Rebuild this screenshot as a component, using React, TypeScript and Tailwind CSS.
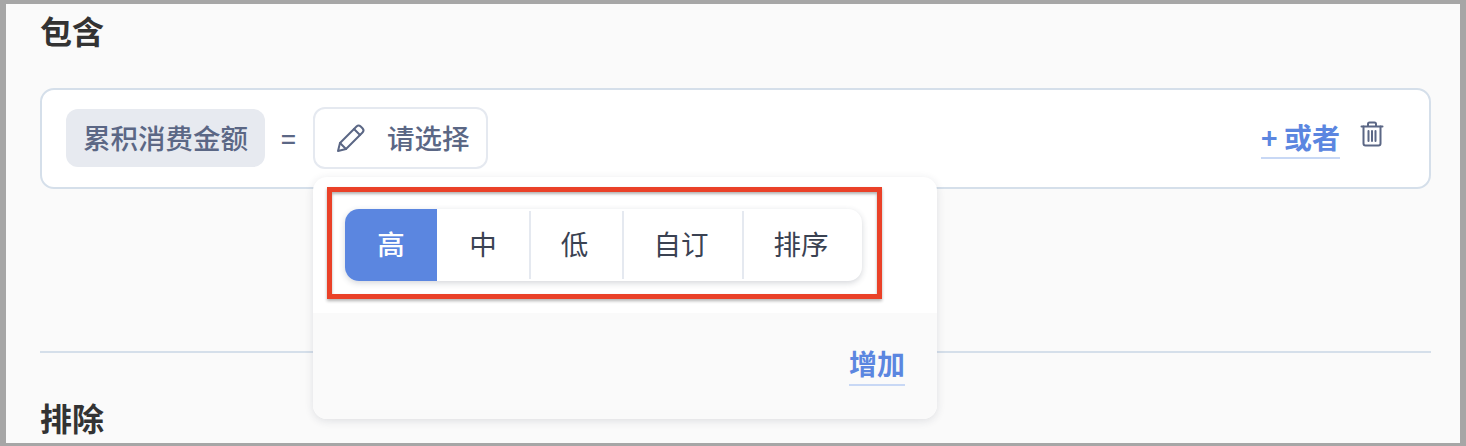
const font = { fontFamily: '"Noto Sans CJK SC", "Noto Sans CJK TC", sans-serif' };

function Segment({ label, active, width, divider }: { label: string; active?: boolean; width: string; divider?: boolean }) {
  return (
    <div className={`relative flex h-full items-center justify-center pb-[2px] text-[27.5px] ${divider ? "pr-[2px]" : ""} ${width} ${active ? "bg-[#5b86e0] font-medium text-white" : "text-[#3a4252]"}`}>
      {label}
      {divider && <span className="absolute left-0 top-[2px] bottom-[2px] w-[2px] bg-[#e5e9f0]" />}
    </div>
  );
}

export default function App() {
  return (
    <div style={font} className="h-[446px] w-[1466px] overflow-hidden border-x-[6px] border-t-[4px] border-b-[3px] border-[#a6a6a6] bg-[#fafafa]">
      <div className="flex h-full flex-col pl-[34px] pr-[29px]">
        <h2 className="h-[54px] pt-[4px] text-[32px] font-bold leading-[44px] text-[#333333]">包含</h2>
        <div className="relative mt-[30px] flex h-[101px] items-center rounded-[14px] border-2 border-[#d5dfea] bg-white pb-[2px] pl-[24px] pr-[45px]">
          <div className="flex h-[58px] w-[199px] items-center justify-center rounded-[12px] bg-[#e7eaf0] text-[27.5px] font-medium text-[#5b6785]">累积消费金额</div>
          <span className="ml-[16px] w-[16px] text-[26px] font-medium text-[#5b6785]">=</span>
          <div className="ml-[16px] flex h-[62px] w-[175px] items-center rounded-[12px] border-2 border-[#e5e9f0] pl-[21px] text-[27.5px] font-medium text-[#5b6785]">
            <svg viewBox="0 0 30 30" className="h-[30px] w-[30px]" fill="none" stroke="#5b6785" strokeWidth="2" strokeLinejoin="round" strokeLinecap="round">
              <path d="M2 28l2-8L20.5 3.5a3 3 0 0 1 4.2 0l1.8 1.8a3 3 0 0 1 0 4.2L10 26z" />
              <path d="M4 20l6 6M18 6l6 6" />
            </svg>
            <span className="ml-[21px]">请选择</span>
          </div>
          <div className="ml-auto flex items-start">
            <span className="mt-[2px] border-b-2 border-[#c8d8f5] pb-[2px] text-[28px] font-bold leading-[36px] text-[#5b86e0]">+ 或者</span>
            <svg viewBox="0 0 24 26" className="ml-[20px] mt-[4px] h-[26px] w-[24px]" fill="none" stroke="#5b6785" strokeWidth="2" strokeLinecap="round" strokeLinejoin="round">
              <path d="M1.5 5.5h21M8 5.5V3a1.5 1.5 0 0 1 1.5-1.5h5A1.5 1.5 0 0 1 16 3v2.5" />
              <path d="M3.5 5.5v17a2 2 0 0 0 2 2h13a2 2 0 0 0 2-2v-17" />
              <path d="M8.5 10v10M12 10v10M15.5 10v10" />
            </svg>
          </div>
          <div className="absolute left-[271px] top-[87px] z-10 flex h-[242px] w-[624px] flex-col overflow-hidden rounded-[14px] bg-white shadow-[0_2px_8px_rgba(40,50,70,0.13)]">
            <div className="h-[136px] shrink-0 pl-[14px] pt-[10px]">
              <div className="h-[112px] w-[555px] border-[5px] border-[#ea4128] pl-[13px] pt-[17px] shadow-[0_2px_3px_rgba(0,0,0,0.3),inset_0_2px_3px_rgba(0,0,0,0.3)]">
                <div className="flex h-[72px] w-[517px] overflow-hidden rounded-[14px] bg-white shadow-[0_2px_6px_rgba(40,50,70,0.2)]">
                  <Segment label="高" active width="w-[92px]" />
                  <Segment label="中" width="w-[92px]" />
                  <Segment label="低" width="w-[93px]" divider />
                  <Segment label="自订" width="w-[120px]" divider />
                  <Segment label="排序" width="w-[120px]" divider />
                </div>
              </div>
            </div>
            <div className="flex flex-1 items-start justify-end bg-[#fafafa] pr-[32px] pt-[29px]">
              <span className="border-b-2 border-[#c8d8f5] text-[28px] font-bold leading-[42px] text-[#5b86e0]">增加</span>
            </div>
          </div>
        </div>
        <div className="mt-[162px] h-[2px] shrink-0 bg-[#d5dfea]" />
        <h2 className="mt-[42px] text-[32px] font-bold leading-[44px] text-[#333333]">排除</h2>
      </div>
    </div>
  );
}
